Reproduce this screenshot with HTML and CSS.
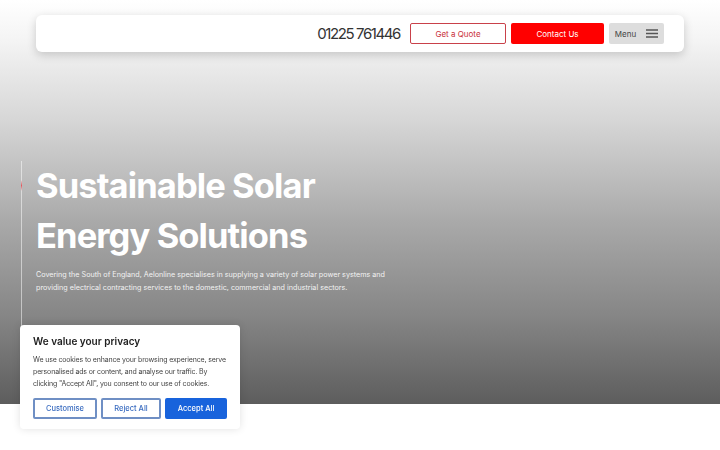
FILE: index.html
```
<!doctype html>
<html lang="en">
  <head>
    <meta charset="UTF-8" />
    <title>Aelonline - Sustainable Solar Energy Solutions</title>
    <link rel="stylesheet" href="styles.css">
  </head>
  <body>
    <section class="hero">
      <!-- Top bar -->
      <header class="site-header">
        <a class="phone" href="#">01225 761446</a>
        <a class="btn btn-outline" href="#">Get a Quote</a>
        <a class="btn btn-red" href="#">Contact Us</a>
        <button class="btn btn-menu" type="button">
          Menu
          <svg width="12" height="9" viewBox="0 0 12 9">
            <path d="M0 1h12M0 4.5h12M0 8h12" stroke="#555" stroke-width="1.3" />
          </svg>
        </button>
      </header>

      <!-- Hero copy -->
      <div class="hero-body">
        <h1>Sustainable Solar<br />Energy Solutions</h1>
        <p>
          Covering the South of England, Aelonline specialises in supplying a
          variety of solar power systems and<br />providing electrical contracting
          services to the domestic, commercial and industrial sectors.
        </p>
      </div>
    </section>

    <!-- Cookie banner -->
    <div class="cookie-box">
      <h3>We value your privacy</h3>
      <p>
        We use cookies to enhance your browsing experience, serve<br />personalised
        ads or content, and analyse our traffic. By<br />clicking "Accept All", you
        consent to our use of cookies.
      </p>
      <div class="cookie-actions">
        <button class="cookie-btn">Customise</button>
        <button class="cookie-btn">Reject All</button>
        <button class="cookie-btn cookie-accept">Accept All</button>
      </div>
    </div>
  </body>
</html>
```

FILE: styles.css
```
body {
  margin: 0;
  font-family: Inter, "Noto Sans", Arial, sans-serif;
  background-color: #fff;
}

.hero {
  height: 404px;
  background: linear-gradient(180deg, #ffffff 0%, #f4f4f4 10%, #d6d6d6 30%, #a9a9a9 55%, #868686 78%, #5d5d5d 100%);
  padding-top: 15px;
  box-sizing: border-box;
  display: flex;
  flex-direction: column;
}

.site-header {
  margin: 0 36px;
  height: 37px;
  background-color: #fff;
  border-radius: 6px;
  box-shadow: 0 3px 10px rgba(0, 0, 0, 0.18);
  display: flex;
  align-items: center;
  justify-content: flex-end;
  gap: 5px;
  padding-right: 20px;
}

.phone {
  color: #333;
  font-size: 15px;
  letter-spacing: -1.4px;
  text-decoration: none;
  margin-right: 5px;
}

.btn {
  height: 21px;
  box-sizing: border-box;
  display: flex;
  align-items: center;
  justify-content: center;
  font-family: inherit;
  font-size: 8px;
  text-decoration: none;
  border-radius: 2px;
}

.btn-outline {
  width: 96px;
  border: 1px solid #c9414a;
  color: #c9303a;
}

.btn-red {
  width: 93px;
  background-color: #ff0000;
  color: #fff;
}

.btn-menu {
  width: 55px;
  background-color: #dddddd;
  color: #444;
  border: none;
  gap: 10px;
  padding: 0;
}

.hero-body {
  margin: 109px 0 0 21px;
  flex: 1;
  border-left: 1px solid rgba(255, 255, 255, 0.5);
  padding-left: 14px;
  position: relative;
}

/* small red accent on the side line */
.hero-body::before {
  content: "";
  position: absolute;
  left: -1px;
  top: 19px;
  width: 1px;
  height: 11px;
  background: linear-gradient(180deg, transparent, #e2595f, transparent);
}

.hero-body h1 {
  margin: 0;
  color: #fff;
  font-size: 34.5px;
  font-weight: 700;
  line-height: 50px;
  letter-spacing: -0.9px;
}

.hero-body p {
  margin: 7px 0 0;
  color: #f2f2f2;
  font-size: 7.2px;
  line-height: 13px;
  white-space: nowrap;
}

.cookie-box {
  position: fixed;
  left: 20px;
  top: 325px;
  width: 220px;
  box-sizing: border-box;
  padding: 10px 13px 10px;
  background-color: #fff;
  border-radius: 4px;
  box-shadow: 0 0 8px rgba(0, 0, 0, 0.12);
}

.cookie-box h3 {
  margin: 0 0 7px;
  font-size: 10px;
  font-weight: 600;
  color: #212121;
}

.cookie-box p {
  margin: 0 0 8px;
  font-size: 7px;
  line-height: 12px;
  letter-spacing: -0.15px;
  color: #444;
  white-space: nowrap;
}

.cookie-actions {
  display: flex;
  gap: 4px;
}

.cookie-btn {
  height: 21px;
  flex: 1;
  padding: 0;
  font-family: inherit;
  font-size: 7.5px;
  font-weight: 500;
  color: #3a6cc0;
  background-color: #fff;
  border: 2px solid #6f8fc4;
  border-radius: 2px;
}

.cookie-btn:first-child {
  flex: 0 0 64px;
}

.cookie-btn:nth-child(2) {
  flex: 0 0 60px;
}

.cookie-accept {
  background-color: #1863dc;
  border-color: #1863dc;
  color: #fff;
}
```
